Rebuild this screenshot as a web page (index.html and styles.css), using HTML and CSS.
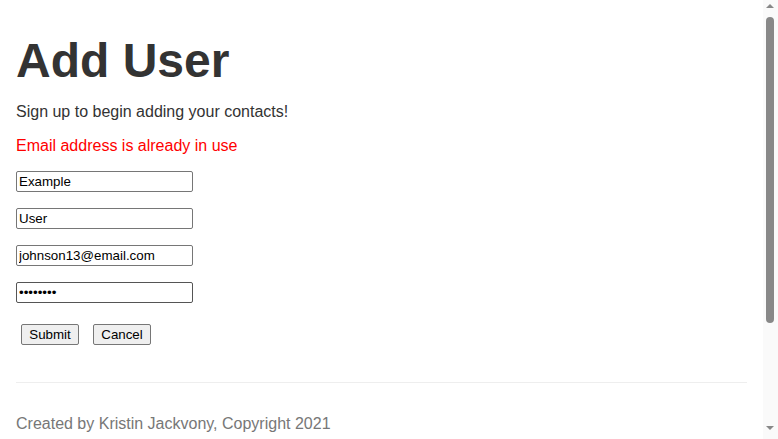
FILE: index.html
```html
<!DOCTYPE html>
<html lang="en">
<head>
<meta charset="utf-8">
<title>Add User</title>
<link rel="stylesheet" href="styles.css">
</head>
<body>
<div class="page">
  <main class="content">
    <h1 class="title">Add User</h1>
    <p class="lead">Sign up to begin adding your contacts!</p>
    <p class="error">Email address is already in use</p>
    <form class="form">
      <div class="field"><input class="input" type="text" value="Example"></div>
      <div class="field"><input class="input" type="text" value="User"></div>
      <div class="field"><input class="input" type="email" value="johnson13@email.com"></div>
      <div class="field"><input class="input input-pass" type="password" value="password"></div>
      <div class="actions">
        <button class="btn" type="button">Submit</button>
        <button class="btn" type="button">Cancel</button>
      </div>
    </form>
  </main>
  <footer class="footer">
    <hr class="rule">
    <p class="credit">Created by Kristin Jackvony, Copyright 2021</p>
  </footer>
</div>
<div class="scrollbar" aria-hidden="true">
  <span class="arrow arrow-up"></span>
  <span class="thumb"></span>
  <span class="arrow arrow-down"></span>
</div>
</body>
</html>
```
FILE: styles.css
```css
html, body {
  margin: 0;
  padding: 0;
  background: #fff;
}
body {
  font-family: "Liberation Sans", Arial, sans-serif;
  color: #333;
  margin-right: 15px;
}
.page {
  padding: 34px 16px 0;
}
.title {
  margin: 0;
  font-size: 48px;
  line-height: 53px;
  font-weight: bold;
  color: #333;
}
.lead {
  margin: 14px 0 0;
  font-size: 16px;
  line-height: 22px;
}
.error {
  margin: 12px 0 0;
  font-size: 16px;
  line-height: 22px;
  color: #f00;
}
.form {
  margin-top: 14px;
}
.field {
  margin-bottom: 16px;
  height: 21px;
}
.input {
  box-sizing: border-box;
  width: 177px;
  height: 21px;
  margin: 0;
  padding: 1px 2px;
  font: 13.33px "Liberation Sans", Arial, sans-serif;
  color: #000;
  background: #fff;
  border: 1px solid #767676;
  border-radius: 2px;
}
.input-pass {
  border-color: #555;
}
.actions {
  display: flex;
  gap: 14px;
  padding-left: 5px;
  margin-top: 21px;
}
.btn {
  box-sizing: border-box;
  height: 21px;
  width: 58px;
  margin: 0;
  padding: 1px 6px;
  font: 13.33px "Liberation Sans", Arial, sans-serif;
  color: #000;
  background: #efefef;
  border: 1px solid #767676;
  border-radius: 2px;
}
.footer {
  margin-top: 37px;
}
.rule {
  margin: 0;
  border: 0;
  border-top: 1px solid #eee;
  height: 0;
}
.credit {
  margin: 30px 0 0;
  font-size: 16px;
  line-height: 22px;
  color: #777;
}
.scrollbar {
  position: fixed;
  top: 0;
  right: 0;
  width: 15px;
  height: 100%;
  background: #fafafa;
}
.thumb {
  position: absolute;
  left: 3px;
  top: 17px;
  width: 8px;
  height: 306px;
  border-radius: 4px;
  background: #888;
}
.arrow {
  position: absolute;
  left: 3px;
  width: 0;
  height: 0;
  border-left: 4px solid transparent;
  border-right: 4px solid transparent;
}
.arrow-up {
  top: 4px;
  border-bottom: 4px solid #888;
}
.arrow-down {
  bottom: 9px;
  border-top: 4px solid #888;
}
```
